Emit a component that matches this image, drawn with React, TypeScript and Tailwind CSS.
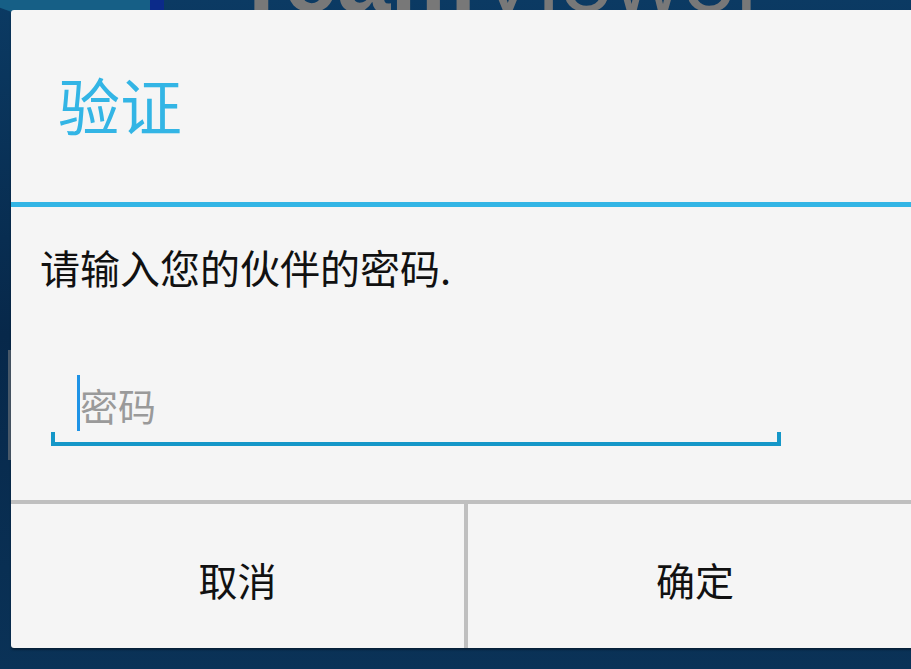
import React from 'react';

const cjk = { fontFamily: '"Noto Sans CJK SC", "Noto Sans", sans-serif' };

export default function App() {
  return (
    <div
      className="relative w-[911px] h-[669px] overflow-hidden bg-gradient-to-b from-[#0b3a63] via-[#07284a] to-[#0a3257]"
      style={cjk}
    >
      {/* app behind the dialog, only its edges show */}
      <div className="absolute left-[-20px] top-[-70px] w-[180px] h-[100px] rotate-[20deg] bg-[#1b6f95] opacity-70" />
      <div className="absolute left-[150px] top-0 w-[14px] h-[12px] bg-[#0b2a8a]" />
      <div
        className="absolute left-[232px] top-[-70px] text-[96px] leading-none text-[#787878] whitespace-nowrap"
        style={{ fontFamily: '"Liberation Sans", sans-serif' }}
      >
        <span className="font-bold">Team</span>
        <span className="font-light">Viewer</span>
      </div>
      <div className="absolute left-[8px] top-[350px] w-[4px] h-[110px] bg-[#4a5a6a]" />

      {/* dialog */}
      <div className="relative z-10 ml-[11px] mt-[10px] w-[911px] h-[638px] bg-[#f5f5f5] rounded-[3px] flex flex-col shadow-[0_2px_2px_rgba(0,0,0,0.35)]">
        <div className="h-[192px] flex items-center pl-[47px] pb-[4px]">
          <h1 className="text-[62px] leading-none text-[#33b5e5]">验证</h1>
        </div>
        <div className="h-[5px] bg-[#33b5e5]" />

        <div className="flex-1 flex flex-col">
          <p className="pt-[36px] pl-[29px] text-[40px] leading-[48px] text-[#111]">
            请输入您的伙伴的密码.
          </p>

          <div className="mt-[84px] ml-[40px] w-[730px]">
            <div className="h-[56px] pl-[26px] flex items-center">
              <div className="w-[3px] h-[56px] bg-[#1e93e6]" />
              <span className="text-[38px] leading-none text-[#9a9a9a] pt-[4px]">密码</span>
            </div>
            <div className="mt-[1px] h-[14px] border-x-4 border-b-4 border-[#1597c8]" />
          </div>
        </div>

        <div className="h-[148px] border-t-4 border-[#bfbfbf] flex">
          <button className="w-[453px] flex items-center justify-center pt-[6px] text-[39px] text-[#111]">
            取消
          </button>
          <div className="w-[4px] bg-[#bfbfbf]" />
          <button className="flex-1 flex items-center justify-center pt-[6px] text-[39px] text-[#111]">
            确定
          </button>
        </div>
      </div>
    </div>
  );
}
